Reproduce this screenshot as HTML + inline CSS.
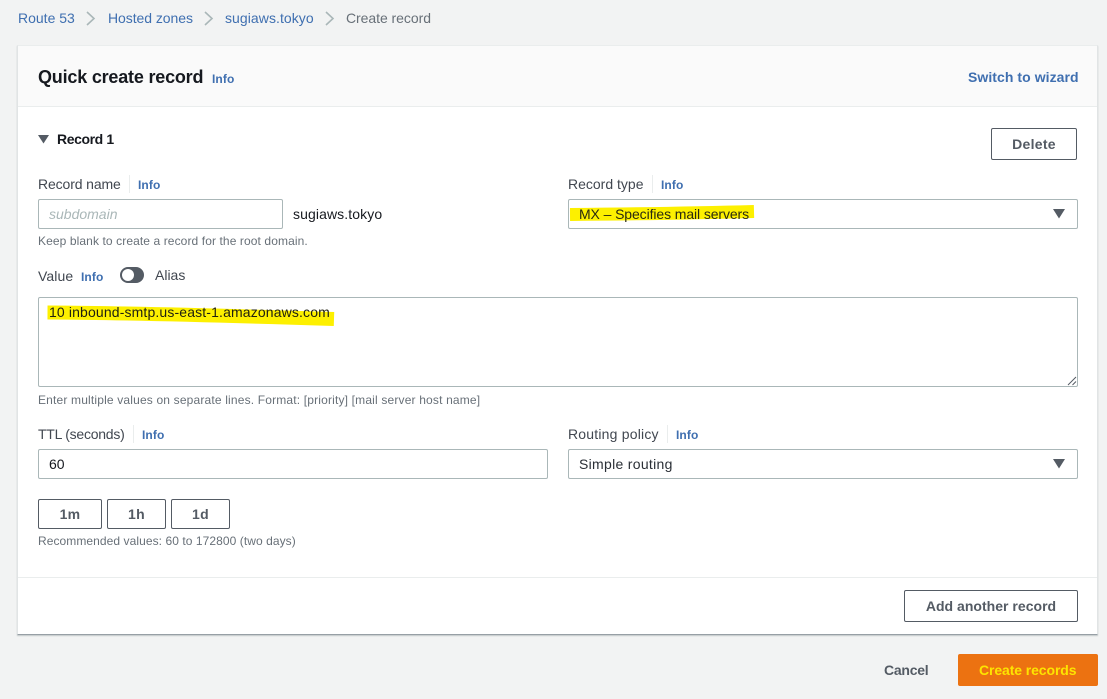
<!DOCTYPE html>
<html><head><meta charset="utf-8"><style>
html,body{margin:0;padding:0}
body{width:1107px;height:699px;background:#f2f3f3;overflow:hidden;position:relative;font-family:"Liberation Sans",sans-serif;font-size:14px;color:#16191f}
.t{position:absolute;white-space:nowrap;line-height:20px}
.a{color:#3f6fb0}
.g{color:#687078;font-size:12px;letter-spacing:.12px;line-height:16px}
.i{color:#3f6fb0;font-weight:bold;font-size:12px;letter-spacing:.1px}
.b{position:absolute;box-sizing:border-box;background:#fff;border:1px solid #aab7b8;border-radius:2px}
.btn{position:absolute;box-sizing:border-box;background:#fff;border:1px solid #545b64;border-radius:2px;color:#545b64;font-weight:bold;font-size:14px;text-align:center;letter-spacing:.3px}
.sep{position:absolute;width:1px;background:#eaeded}
</style></head><body>
<span class="t a" style="left:18px;top:8px">Route 53</span>
<span class="t a" style="left:108px;top:8px;letter-spacing:-.06px">Hosted zones</span>
<span class="t a" style="left:225px;top:8px;letter-spacing:.06px">sugiaws.tokyo</span>
<span class="t" style="left:346px;top:8px;color:#687078;letter-spacing:-.05px">Create record</span>
<svg style="position:absolute;left:0;top:0" width="340" height="36" fill="none" stroke="#aab7b8" stroke-width="1.6"><path d="M87 12l7 6.500-7 6.500M205 12l7 6.500-7 6.500M326 12l7 6.500-7 6.500"/></svg>

<div style="position:absolute;left:17px;top:45px;width:1081px;height:590px;box-sizing:border-box;background:#fff;border-left:1px solid #e1e4e5;border-right:1px solid #e1e4e5;border-top:1px solid #eaeded;border-bottom:1px solid #979fa5;box-shadow:0 1px 1px rgba(0,28,36,.2)"></div>
<div style="position:absolute;left:18px;top:46px;width:1079px;height:61px;box-sizing:border-box;background:#fafafa;border-bottom:1px solid #eaeded"></div>

<span class="t" style="left:38px;top:67px;font-size:18px;font-weight:bold;letter-spacing:-.2px">Quick create record</span>
<span class="t i" style="left:212px;top:69px">Info</span>
<span class="t" style="left:968px;top:67px;font-weight:bold;color:#3f6fb0;letter-spacing:.06px">Switch to wizard</span>

<svg style="position:absolute;left:38px;top:134px" width="12" height="10"><path d="M0 1h11L5.500 9.500z" fill="#545b64"/></svg>
<span class="t" style="left:57px;top:129px;font-weight:bold;letter-spacing:-.4px">Record 1</span>
<div class="btn" style="left:991px;top:128px;width:86px;height:32px;line-height:30px">Delete</div>

<span class="t" style="left:38px;top:174px;color:#414750;letter-spacing:-.12px">Record name</span>
<div class="sep" style="left:129px;top:175px;height:18px"></div>
<span class="t i" style="left:138px;top:175px">Info</span>
<div class="b" style="left:38px;top:199px;width:245px;height:30px"></div>
<span class="t" style="left:49px;top:204px;font-style:italic;color:#aab7b8;letter-spacing:0">subdomain</span>
<span class="t" style="left:293px;top:204px;letter-spacing:.1px">sugiaws.tokyo</span>
<span class="t g" style="left:38px;top:233px;letter-spacing:.1px">Keep blank to create a record for the root domain.</span>

<span class="t" style="left:568px;top:174px;color:#414750;letter-spacing:0">Record type</span>
<div class="sep" style="left:652px;top:175px;height:18px"></div>
<span class="t i" style="left:661px;top:175px">Info</span>
<div class="b" style="left:568px;top:199px;width:510px;height:30px"></div>
<svg style="position:absolute;left:568px;top:200px" width="200" height="28"><path d="M2 14.500C60 14 130 13 186 11.500" stroke="#fdf000" stroke-width="13" fill="none"/></svg>
<span class="t" style="left:579px;top:204px;color:#2a2a10;letter-spacing:-.1px">MX – Specifies mail servers</span>
<svg style="position:absolute;left:1053px;top:209px" width="13" height="10"><path d="M0 0h12L6 9.500z" fill="#545b64"/></svg>

<span class="t" style="left:38px;top:266px;color:#414750;letter-spacing:.1px">Value</span>
<span class="t i" style="left:81px;top:267px">Info</span>
<div style="position:absolute;left:120px;top:267px;width:24px;height:16px;border-radius:8px;background:#545b64"></div>
<div style="position:absolute;left:122px;top:269px;width:12px;height:12px;border-radius:50%;background:#fff"></div>
<span class="t" style="left:155px;top:265px;color:#414750;letter-spacing:0">Alias</span>

<div class="b" style="left:38px;top:297px;width:1040px;height:90px"></div>
<svg style="position:absolute;left:40px;top:300px" width="300" height="30"><path d="M7.500 12.500C100 13 200 16 294 19" stroke="#fdf000" stroke-width="14" fill="none"/></svg>
<span class="t" style="left:49px;top:302px;color:#1f1f10;letter-spacing:.14px">10 inbound-smtp.us-east-1.amazonaws.com</span>
<svg style="position:absolute;left:1066px;top:375px" width="11" height="11" stroke="#545b64" stroke-width="1"><path d="M2 10L10 2M6.500 10L10 6.500"/></svg>
<span class="t g" style="left:38px;top:392px;letter-spacing:.17px">Enter multiple values on separate lines. Format: [priority] [mail server host name]</span>

<span class="t" style="left:38px;top:424px;color:#414750;letter-spacing:-.25px">TTL (seconds)</span>
<div class="sep" style="left:133px;top:425px;height:18px"></div>
<span class="t i" style="left:142px;top:425px">Info</span>
<div class="b" style="left:38px;top:449px;width:510px;height:30px"></div>
<span class="t" style="left:49px;top:454px">60</span>

<span class="t" style="left:568px;top:424px;color:#414750;letter-spacing:.2px">Routing policy</span>
<div class="sep" style="left:667px;top:425px;height:18px"></div>
<span class="t i" style="left:676px;top:425px">Info</span>
<div class="b" style="left:568px;top:449px;width:510px;height:30px"></div>
<span class="t" style="left:579px;top:454px;color:#2a2f36;letter-spacing:.3px">Simple routing</span>
<svg style="position:absolute;left:1053px;top:459px" width="13" height="10"><path d="M0 0h12L6 9.500z" fill="#545b64"/></svg>

<div class="btn" style="left:38px;top:499px;width:64px;height:30px;line-height:28px">1m</div>
<div class="btn" style="left:107px;top:499px;width:59px;height:30px;line-height:28px">1h</div>
<div class="btn" style="left:171px;top:499px;width:59px;height:30px;line-height:28px">1d</div>
<span class="t g" style="left:38px;top:533px;letter-spacing:.07px">Recommended values: 60 to 172800 (two days)</span>

<div style="position:absolute;left:18px;top:577px;width:1079px;height:1px;background:#eaeded"></div>
<div class="btn" style="left:904px;top:590px;width:174px;height:32px;line-height:30px;letter-spacing:.02px">Add another record</div>

<span class="t" style="left:884px;top:660px;font-weight:bold;color:#545b64;letter-spacing:-.25px">Cancel</span>
<div style="position:absolute;left:958px;top:654px;width:140px;height:32px;background:#ec7211;border-radius:2px"></div>
<span class="t" style="left:979px;top:660px;font-weight:bold;color:#fde400;letter-spacing:-.1px">Create records</span>
</body></html>
